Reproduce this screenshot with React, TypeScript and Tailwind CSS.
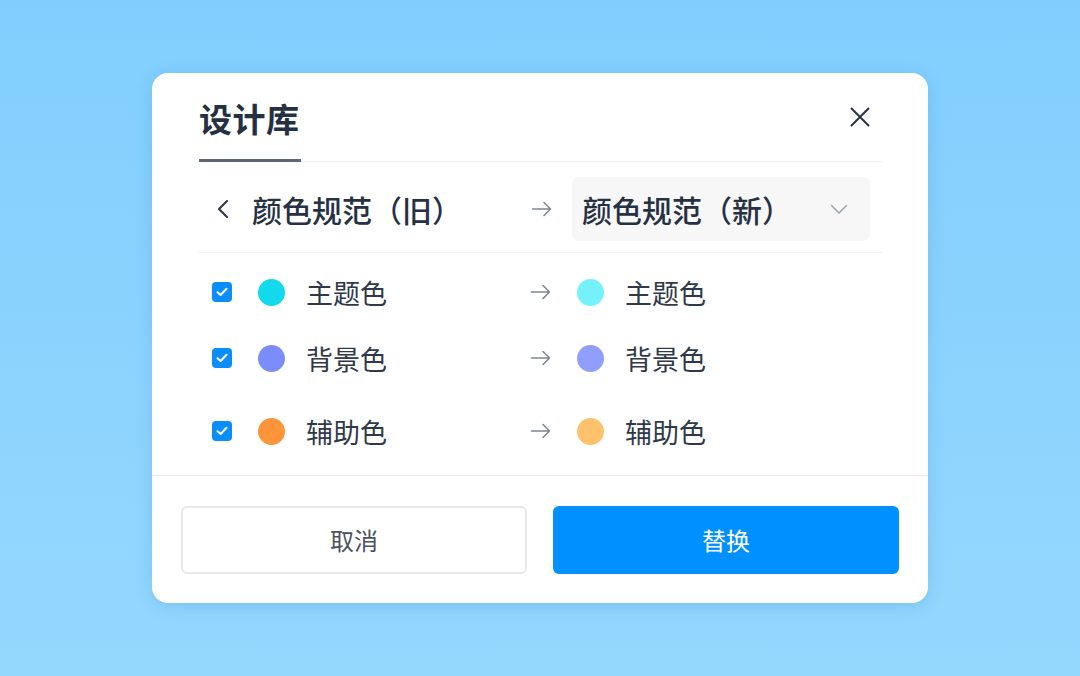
import { useState } from 'react'

type ColorPair = {
  name: string
  from: string
  to: string
}

const pairs: ColorPair[] = [
  { name: '主题色', from: 'bg-[#12d9ec]', to: 'bg-[#74f1fb]' },
  { name: '背景色', from: 'bg-[#7b8cff]', to: 'bg-[#909fff]' },
  { name: '辅助色', from: 'bg-[#ff943a]', to: 'bg-[#ffc16c]' },
]

function ArrowRight() {
  return (
    <svg width="22" height="16" viewBox="0 0 22 16" fill="none" className="shrink-0">
      <path d="M1.5 8h18M13 1.5 19.5 8 13 14.5" stroke="#7f8794" strokeWidth="1.6" strokeLinecap="round" strokeLinejoin="round" />
    </svg>
  )
}

function CheckBox({ checked }: { checked: boolean }) {
  return (
    <span className="flex h-5 w-5 shrink-0 items-center justify-center rounded-[4px] bg-[#0a8dff]">
      {checked && (
        <svg width="12" height="10" viewBox="0 0 12 10" fill="none">
          <path d="M1.5 5.2 4.6 8 10.5 1.8" stroke="white" strokeWidth="2" strokeLinecap="round" strokeLinejoin="round" />
        </svg>
      )}
    </span>
  )
}

function PairRow({ pair, className }: { pair: ColorPair; className?: string }) {
  const [checked, setChecked] = useState(true)
  return (
    <div className={`flex h-[66px] items-center ${className ?? ''}`}>
      <div className="flex w-[331px] items-center pl-[13px]" onClick={() => setChecked(!checked)}>
        <CheckBox checked={checked} />
        <span className={`ml-[26px] h-[27px] w-[27px] rounded-full ${pair.from}`} />
        <span className="ml-[21px] text-[27px] leading-none text-[#2f394a]">{pair.name}</span>
      </div>
      <ArrowRight />
      <span className={`ml-[25px] h-[27px] w-[27px] rounded-full ${pair.to}`} />
      <span className="ml-[21px] text-[27px] leading-none text-[#2f394a]">{pair.name}</span>
    </div>
  )
}

export default function App() {
  return (
    <div
      className="flex h-[676px] w-full items-center justify-center bg-gradient-to-b from-[#81cefe] to-[#95d8fe]"
      style={{ fontFamily: '"Noto Sans CJK SC", "Noto Sans", sans-serif' }}
    >
      <div className="flex h-[530px] w-[776px] flex-col rounded-[16px] bg-white shadow-[0_4px_18px_rgba(30,110,180,0.18)]">
        <div className="mx-[46px] ml-[47px] flex h-[89px] shrink-0 items-stretch justify-between border-b border-[#eeeff1]">
          <div className="-mb-px flex items-center border-b-[3px] border-[#5d6677] pt-[4px] pr-px">
            <span className="text-[33px] font-bold leading-none tracking-[0.5px] text-[#253042]">设计库</span>
          </div>
          <button className="mr-[12px] mt-[34px] h-[20px] self-start">
            <svg width="20" height="20" viewBox="0 0 20 20" fill="none">
              <path d="M1.5 1.5 18.5 18.5M18.5 1.5 1.5 18.5" stroke="#2b3343" strokeWidth="2" strokeLinecap="round" />
            </svg>
          </button>
        </div>

        <div className="mx-[46px] ml-[47px] flex h-[91px] shrink-0 items-center border-b border-[#eeeff1] pt-[4px]">
          <div className="flex w-[332px] items-center pl-[18px]">
            <svg width="12" height="20" viewBox="0 0 12 20" fill="none">
              <path d="M10 2 2 10l8 8" stroke="#2b3343" strokeWidth="2" strokeLinecap="round" strokeLinejoin="round" />
            </svg>
            <span className="ml-[23px] text-[30px] font-medium leading-none text-[#263143]">颜色规范（旧）</span>
          </div>
          <ArrowRight />
          <div className="ml-[19px] flex h-[64px] w-[298px] items-center justify-between rounded-[7px] bg-[#f7f7f8] pl-[10px] pr-[22px]">
            <span className="text-[30px] font-medium leading-none text-[#263143]">颜色规范（新）</span>
            <svg width="18" height="11" viewBox="0 0 18 11" fill="none">
              <path d="M1.5 1.5 9 9l7.5-7.5" stroke="#9aa1ab" strokeWidth="1.5" strokeLinecap="round" strokeLinejoin="round" />
            </svg>
          </div>
        </div>

        <div className="mx-[46px] ml-[47px] flex h-[222px] shrink-0 flex-col pt-[6px]">
          <PairRow pair={pairs[0]} />
          <PairRow pair={pairs[1]} />
          <PairRow pair={pairs[2]} className="mt-[7px]" />
        </div>

        <div className="flex flex-1 items-start justify-between border-t border-[#e8e9eb] px-[29px] pt-[30px]">
          <button className="flex h-[68px] w-[346px] items-center justify-center rounded-[6px] border-2 border-[#e6e8eb] bg-white text-[24px] text-[#4b5362]">
            取消
          </button>
          <button className="flex h-[68px] w-[346px] items-center justify-center rounded-[6px] bg-[#0190ff] text-[24px] text-white">
            替换
          </button>
        </div>
      </div>
    </div>
  )
}
